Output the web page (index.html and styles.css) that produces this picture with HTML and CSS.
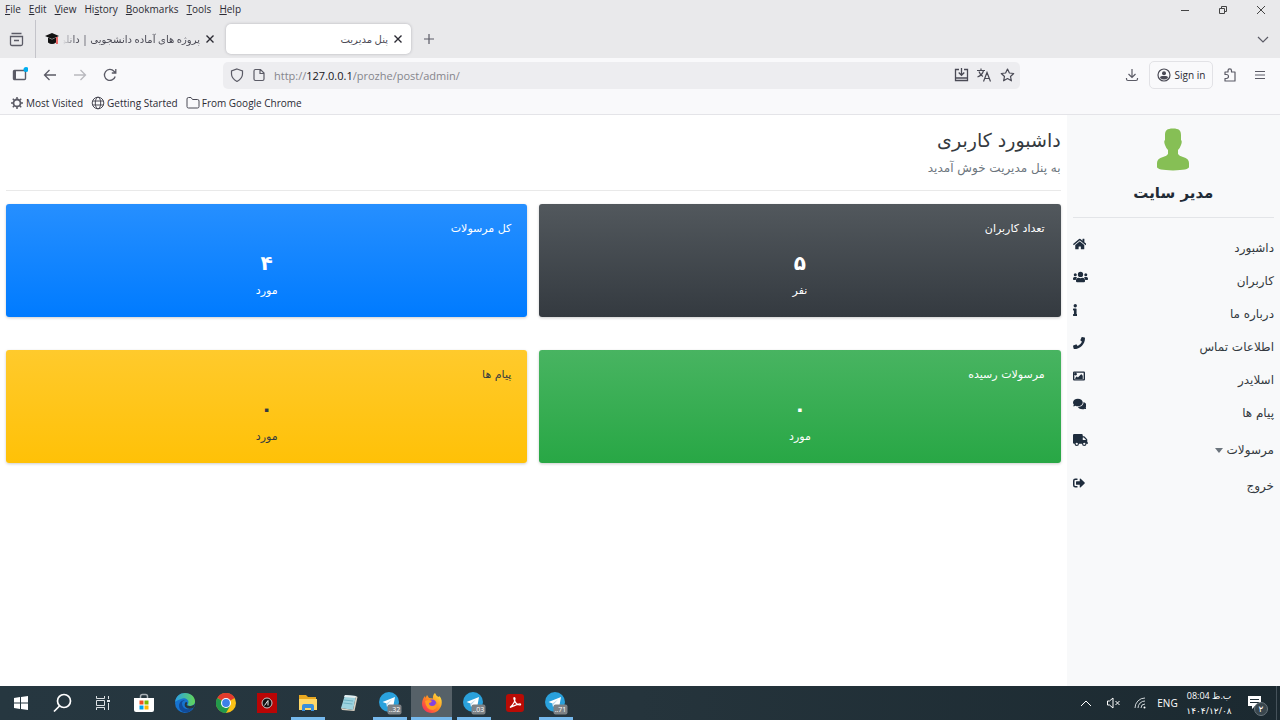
FILE: index.html
```html
<!DOCTYPE html>
<html lang="fa">
<head>
    <meta charset="UTF-8">
    <meta name="viewport" content="width=device-width, initial-scale=1.0">
    <title>پنل مدیریت</title>
    <link rel="stylesheet" href="styles.css">
</head>
<body>

<svg class="defs" aria-hidden="true">
    <symbol id="telegram" viewBox="0 0 24 24">
        <circle cx="11" cy="11" r="10" fill="#2aa1dc"/>
        <path d="M4.500 11 17 6l-2 11-4-3-2 2-.500-3.500z" fill="#fff"/>
        <path d="M8.500 12.500 14 8.500l-4.500 5L9 16z" fill="#b5d6ea"/>
        <rect x="9.500" y="13.500" width="14" height="10" rx="2" fill="#7d8286"/>
    </symbol>
    <symbol id="close" viewBox="0 0 12 12">
        <path d="M2.500 2.500l7 7M9.500 2.500l-7 7" fill="none" stroke="currentColor" stroke-width="1.400"/>
    </symbol>
</svg>

<!-- 浏览器顶部 -->
<header class="browser" lang="en">
    <div class="menubar">
        <nav class="menus">
            <button><u>F</u>ile</button>
            <button><u>E</u>dit</button>
            <button><u>V</u>iew</button>
            <button>Hi<u>s</u>tory</button>
            <button><u>B</u>ookmarks</button>
            <button><u>T</u>ools</button>
            <button><u>H</u>elp</button>
        </nav>
        <div class="window-buttons">
            <button aria-label="Minimize"><svg width="10" height="10"><path d="M1 5.500h8" stroke="#444"/></svg></button>
            <button aria-label="Restore"><svg width="10" height="10" fill="none" stroke="#444"><path d="M1.500 3.500h5v5h-5zM3.500 3.500v-2h5v5h-2"/></svg></button>
            <button aria-label="Close"><svg width="10" height="10" fill="none" stroke="#444"><path d="M1 1l8 8M9 1l-8 8"/></svg></button>
        </div>
    </div>

    <div class="tabs">
        <button class="tabs-view" aria-label="Firefox View">
            <svg width="15" height="15" fill="none" stroke="#5b5b66" stroke-width="1.300"><path d="M2.500 1.500h10M1.500 4.500h12v7.500q0 1.500-1.500 1.500h-9q-1.500 0-1.500-1.500zM5 8.500h5"/></svg>
        </button>
        <div class="tab">
            <svg width="14" height="14" viewBox="0 0 14 14"><path d="M0 4l7-3 7 3-7 3z" fill="#111"/><path d="M3 5.500v5q4 3 8 0v-5L7 7.500z" fill="#111"/><path d="M12 5v7" stroke="#e22" stroke-width="1.300"/></svg>
            <span class="tab-title fade" dir="rtl">پروژه های آماده دانشجویی | دانلو</span>
            <button class="tab-close" aria-label="Close tab"><svg width="12" height="12"><use href="#close"/></svg></button>
        </div>
        <div class="tab active">
            <span class="tab-title" dir="rtl">پنل مدیریت</span>
            <button class="tab-close" aria-label="Close tab"><svg width="12" height="12"><use href="#close"/></svg></button>
        </div>
        <button class="tab-new" aria-label="New tab"><svg width="12" height="12"><path d="M6 1v10M1 6h10" stroke="#5b5b66" stroke-width="1.200"/></svg></button>
        <button class="tab-list" aria-label="List all tabs"><svg width="12" height="12" fill="none" stroke="#5b5b66" stroke-width="1.200"><path d="M1 4l5 5 5-5"/></svg></button>
    </div>

    <div class="toolbar">
        <button class="tool" aria-label="Sidebar">
            <svg width="16" height="16" viewBox="0 0 16 16" fill="none" stroke="#5b5b66" stroke-width="1.400"><rect x="1.500" y="3.500" width="12" height="9" rx="1"/><path d="M3 4v8" stroke-width="2"/><circle cx="14" cy="2.500" r="2.500" fill="#00aef0" stroke="none"/></svg>
        </button>
        <button class="tool" aria-label="Back"><svg width="14" height="14" fill="none" stroke="#5b5b66" stroke-width="1.300"><path d="M13 7H2M6.500 2L1.500 7l5 5"/></svg></button>
        <button class="tool" aria-label="Forward" disabled><svg width="14" height="14" fill="none" stroke="#b9b9be" stroke-width="1.300"><path d="M1 7h11M7.500 2l5 5-5 5"/></svg></button>
        <button class="tool" aria-label="Reload"><svg width="14" height="14" fill="none" stroke="#5b5b66" stroke-width="1.300"><path d="M12.200 8.500A5.500 5.500 0 1 1 11 3.200l1.500 1.500M12.800 1v4h-4"/></svg></button>
        <div class="urlbar">
            <svg width="14" height="14" fill="none" stroke="#5b5b66" stroke-width="1.200"><path d="M7 1l5.500 2v3q0 4.500-5.500 7.500Q1.500 10.500 1.500 6V3z"/></svg>
            <svg width="14" height="14" fill="none" stroke="#5b5b66" stroke-width="1.200"><path d="M3.500 1.500h5l3.500 3.500v6q0 1.500-1.500 1.500h-7Q2 12.500 2 11V3q0-1.500 1.500-1.500zM8 1.500V5.500h4"/></svg>
            <div class="url">
                <label for="url">http://<b>127.0.0.1</b></label><input id="url" type="text" value="/prozhe/post/admin/">
            </div>
            <button aria-label="Install"><svg width="15" height="14" fill="none" stroke="#4a4a55" stroke-width="1.300"><path d="M5 1.500H1.500v11h12v-11H10M7.500 0v7M4.700 4.500l2.800 2.800 2.800-2.800M2 10h11"/></svg></button>
            <button aria-label="Translate"><svg width="15" height="14" fill="none" stroke="#4a4a55" stroke-width="1.200"><path d="M0 2.500h8M4 .500v2M6.500 2.500Q5.500 7 .500 9M2 3.500q1 3.500 4 5M6.500 13.500l3.500-9 3.500 9M8 10.500h4.500"/></svg></button>
            <button aria-label="Bookmark"><svg width="15" height="14" fill="none" stroke="#4a4a55" stroke-width="1.200"><path d="M7.500 1l1.900 4 4.300.500-3.200 3 .9 4.300-3.900-2.200-3.900 2.200.9-4.300-3.200-3 4.300-.500z" stroke-linejoin="round"/></svg></button>
        </div>
        <button class="tool" aria-label="Downloads"><svg width="14" height="14" fill="none" stroke="#5b5b66" stroke-width="1.200"><path d="M7 1v8.500M3.500 6L7 9.500 10.500 6M1.500 10v1q0 1.500 1.500 1.500h8q1.500 0 1.500-1.500v-1"/></svg></button>
        <button class="signin">
            <svg width="14" height="14"><circle cx="7" cy="7" r="6" fill="none" stroke="#4a4a55" stroke-width="1.200"/><circle cx="7" cy="5.200" r="2" fill="#4a4a55"/><path d="M3 10q0-2 2-2h4q2 0 2 2-4 3-8 0z" fill="#4a4a55"/></svg>
            Sign in
        </button>
        <button class="tool" aria-label="Extensions"><svg width="14" height="14" fill="none" stroke="#5b5b66" stroke-width="1.200"><path d="M2 6.500V4h3V2.700a1.700 1.700 0 0 1 3.500 0V4H12V13H2V10.500h1.500a2 2 0 0 0 0-4z" stroke-linejoin="round"/></svg></button>
        <button class="tool" aria-label="Menu"><svg width="12" height="12"><path d="M1 2.500h10M1 6h10M1 9.500h10" stroke="#5b5b66" stroke-width="1.100"/></svg></button>
    </div>

    <nav class="bookmarks">
        <a href="#"><svg width="14" height="14" fill="none" stroke="#5b5b66"><circle cx="7" cy="7" r="3.500" stroke-width="1.800"/><path d="M7 1v2.500M7 10.500V13M1 7h2.500M10.500 7H13M2.800 2.800l1.700 1.700M9.500 9.500l1.700 1.700M2.800 11.200l1.700-1.700M9.500 4.500l1.700-1.700" stroke-width="1.500"/></svg>Most Visited</a>
        <a href="#"><svg width="14" height="14" fill="none" stroke="#4a4a55"><circle cx="7" cy="7" r="5.800"/><ellipse cx="7" cy="7" rx="2.700" ry="5.800"/><path d="M1.500 5h11M1.500 9h11"/></svg>Getting Started</a>
        <a href="#"><svg width="14" height="14" fill="none" stroke="#4a4a55"><path d="M1 3q0-1.500 1.500-1.500H5L6.500 3.500h5q1.500 0 1.500 1.500v5.500q0 1.500-1.500 1.500h-9Q1 12 1 10.500z"/></svg>From Google Chrome</a>
    </nav>
</header>

<!-- 管理面板 -->
<div class="panel" dir="rtl">
    <aside class="sidebar">
        <div class="profile">
            <svg width="34" height="44" viewBox="0 0 34 44" fill="#86bf55"><path d="M17 .500c6 0 8 2 8 6.500v5q1.500 1 0 5-1 3-3 5v4q1 2 5 3 6 1.500 6 6v4q0 3-16 3.500Q1 42 1 39v-4q0-4.500 6-6 4-1 5-3v-4q-2-2-3-5-1.500-4 0-5V7c0-4.500 2-6.500 8-6.500z"/></svg>
            <h2>مدیر سایت</h2>
        </div>
        <ul class="nav">
            <li><a href="#">داشبورد</a>
                <svg viewBox="0 0 576 512"><path d="M280 150L96 300v165q0 15 15 15h115q14 0 14-15v-90q0-15 15-15h65q15 0 15 15v90q0 15 15 15h115q15 0 15-15V300L295 150q-7-5-15 0zM570 252l-84-70V44q0-12-12-12h-56q-12 0-12 12v72l-88-74q-30-22-60 0L5 252q-9 9-2 17l26 30q8 9 17 2L280 109q8-6 16 0l234 192q9 7 17-2l25-30q8-9-2-17z"/></svg></li>
            <li><a href="#">کاربران</a>
                <svg viewBox="0 0 640 512"><circle cx="96" cy="160" r="64"/><circle cx="544" cy="160" r="64"/><circle cx="320" cy="144" r="112"/><path d="M64 256h64q30 0 48 18-52 30-60 110H32q-32 0-32-32v-32q0-64 64-64zM512 256h64q64 0 64 64v32q0 32-32 32h-84q-8-80-60-110 18-18 48-18zM243 288q77 36 154 0 115 0 115 115v29q0 48-48 48H176q-48 0-48-48v-29q0-115 115-115z"/></svg></li>
            <li><a href="#">درباره ما</a>
                <svg viewBox="0 0 192 512"><circle cx="96" cy="72" r="72"/><path d="M20 424h20V280H20q-20 0-20-20v-48q0-20 20-20h112q20 0 20 20v212h20q20 0 20 20v48q0 20-20 20H20q-20 0-20-20v-48q0-20 20-20z"/></svg></li>
            <li><a href="#">اطلاعات تماس</a>
                <svg viewBox="0 0 512 512"><path d="M493 25L389 1q-17-4-25 12l-48 112q-6 14 6 25l61 50q-56 120-183 183l-50-61q-11-12-25-6L13 364q-16 8-12 25l24 104q4 19 23 19c257 0 464-207 464-464q0-19-19-23z"/></svg></li>
            <li><a href="#">اسلایدر</a>
                <svg viewBox="0 0 512 512"><path fill-rule="evenodd" d="M48 64h416q48 0 48 48v288q0 48-48 48H48q-48 0-48-48V112q0-48 48-48zM58 118v276h396V118zM112 120a56 56 0 1 0 1 0zM96 384v-48l56-56q8-8 16 0l40 40 136-136q8-8 16 0l56 56v144z"/></svg></li>
            <li class="nav-messages"><a href="#">پیام ها</a>
                <svg viewBox="0 0 576 512"><path d="M416 192c0-88-93-160-208-160S0 104 0 192c0 34 14 66 38 92-13 30-36 54-36 55-5 5 0 13 6 13 37 0 69-12 92-25 32 16 69 25 108 25 115 0 208-72 208-160zM538 412c24-26 38-58 38-92 0-67-54-124-130-148 15 122-95 210-237 212 35 58 107 96 191 96 39 0 76-9 108-25 23 13 55 25 92 25 7 0 10-8 6-13-1 0-24-25-68-55z"/></svg></li>
            <li class="nav-parcels"><a href="#">مرسولات <i class="caret"></i></a>
                <svg viewBox="0 0 640 512"><path fill-rule="evenodd" d="M48 0h320q48 0 48 48v48h44q20 0 34 14l100 100q14 14 14 34v108h16q16 0 16 16v32q0 16-16 16h-48a96 96 0 0 1-192 0H256a96 96 0 0 1-192 0H48q-48 0-48-48V48Q0 0 48 0zM160 368a48 48 0 1 0 1 0zM480 368a48 48 0 1 0 1 0zM416 144v112h144L460 144z"/></svg></li>
            <li class="nav-exit"><a href="#">خروج</a>
                <svg viewBox="0 0 512 512"><path d="M497 273L329 441q-41 30-41-17v-96H152q-24 0-24-24v-96q0-24 24-24h136V88q0-47 41-17l168 168q14 17 0 34zM192 436v-40q0-12-12-12H96q-32 0-32-32V160q0-32 32-32h84q12 0 12-12V76q0-12-12-12H96Q0 64 0 160v192q0 96 96 96h84q12 0 12-12z"/></svg></li>
        </ul>
    </aside>

    <main class="content">
        <div class="page-head">
            <h1>داشبورد کاربری</h1>
            <p>به پنل مدیریت خوش آمدید</p>
        </div>
        <div class="cards">
            <section class="card dark">
                <h3>تعداد کاربران</h3>
                <strong>۵</strong>
                <p>نفر</p>
            </section>
            <section class="card blue">
                <h3>کل مرسولات</h3>
                <strong>۴</strong>
                <p>مورد</p>
            </section>
            <section class="card green">
                <h3>مرسولات رسیده</h3>
                <strong>۰</strong>
                <p>مورد</p>
            </section>
            <section class="card yellow">
                <h3>پیام ها</h3>
                <strong>۰</strong>
                <p>مورد</p>
            </section>
        </div>
    </main>
</div>

<!-- 任务栏 -->
<footer class="taskbar" lang="en">
    <button aria-label="Start"><svg width="16" height="16" fill="#fff"><path d="M1 3l6-1v5.500H1zM8 2l7-1v6.500H8zM1 8.500h6V14l-6-1zM8 8.500h7V15l-7-1z"/></svg></button>
    <button aria-label="Search"><svg width="20" height="20" fill="none" stroke="#fff" stroke-width="1.700"><circle cx="12" cy="8" r="6.500"/><path d="M7.500 13L2 18.500"/></svg></button>
    <button aria-label="Task view"><svg width="16" height="16" fill="none" stroke="#dde2e5"><path d="M1.500 1v2.500h8V1M1.500 5.500h8v5h-8zM1.500 15v-2.500h8V15M13.500 1v3M13.500 8v7"/><path d="M12 6h3" stroke-width="2"/></svg></button>
    <button aria-label="Store"><svg width="20" height="20"><path d="M6.500 6V3.500q0-2 2-2h3q2 0 2 2V6" fill="none" stroke="#a9b1b6" stroke-width="1.500"/><path d="M0 5h20v12q0 2-2 2H2q-2 0-2-2z" fill="#fff"/><path d="M5.500 7.500h4v4h-4z" fill="#f25022"/><path d="M10.500 7.500h4v4h-4z" fill="#7fba00"/><path d="M5.500 12.500h4v4h-4z" fill="#00a4ef"/><path d="M10.500 12.500h4v4h-4z" fill="#ffb900"/></svg></button>
    <button aria-label="Edge">
        <svg width="20" height="20" viewBox="0 0 20 20">
            <defs><linearGradient id="edge" x1="0" x2="1"><stop offset="0" stop-color="#2b9fe8"/><stop offset="1" stop-color="#62d657"/></linearGradient></defs>
            <circle cx="10" cy="10" r="10" fill="#1673cf"/>
            <path d="M0 9C1 3 5 0 10 0c6 0 10 4 10 8.500 0 3-2.500 4.500-5 4.500-2 0-3-1-2-2 2-4-3-7-7-5-3 1-5 2-6 3z" fill="url(#edge)"/>
            <path d="M7 10c0 5 4 8 11 5-5 8-14 4-14-2 0-4 3-6 6-6-2 1-3 2-3 3z" fill="#114b99"/>
            <path d="M12 11c-1 1 0 2 3 2 2.500 0 4-1 5-2.500l-1 4q-6 3-9-1-1-3 1-4.500 2 0 1 2z" fill="#263740"/>
        </svg>
    </button>
    <button aria-label="Chrome"><svg width="20" height="20"><circle cx="10" cy="10" r="10" fill="#fbc116"/><path d="M10 10L1.300 5A10 10 0 0 1 18.700 5z" fill="#e33b2e"/><path d="M10 10L1.300 5A10 10 0 0 0 10 20l4.300-7.500z" fill="#229a4b"/><circle cx="10" cy="10" r="5" fill="#fff"/><circle cx="10" cy="10" r="3.900" fill="#3c80e8"/></svg></button>
    <button aria-label="Assistant"><svg width="20" height="20"><path d="M0 0h20v20H0z" fill="#b90505"/><circle cx="10" cy="10" r="5" fill="#111" stroke="#c9c9c9"/><path d="M7.500 12.500L11 7.500v5" fill="none" stroke="#eee"/></svg></button>
    <button class="open" aria-label="Explorer"><svg width="20" height="18"><path d="M1 1h7l2 2h8v5H1z" fill="#e9a820"/><path d="M1 5h18v11H1z" fill="#ffd868"/><path d="M4 17v-5q0-2 2-2h8q2 0 2 2v5h-3v-3H7v3z" fill="#3a8fdb"/></svg></button>
    <button aria-label="Notepad"><svg width="20" height="20"><path d="M6 2l11 1-3 14-12-2z" fill="#9dd3df"/><path d="M6 2l11 1-.500 2L5 4z" fill="#e5eef0"/><path d="M17 3l1.500 1-3 14-1.500-1zM2 15l12 2 1.500 1L3 17z" fill="#d9d2c4"/><path d="M5 7l9 1M4.500 10l9 1" stroke="#6eb2c4"/></svg></button>
    <button class="open" aria-label="Telegram 32"><svg width="24" height="24"><use href="#telegram"/><text x="16.500" y="21">..32</text></svg></button>
    <button class="open current" aria-label="Firefox">
        <svg width="20" height="20" viewBox="0 0 20 20">
            <defs><linearGradient id="fox" x1="1" y1="0" x2="0" y2="1"><stop offset="0" stop-color="#fff044"/><stop offset=".500" stop-color="#ff8a1e"/><stop offset="1" stop-color="#f5156c"/></linearGradient></defs>
            <path d="M13 0q1 3 4 4l.500-1C20 6 20 9 19.500 12 18 17 14 20 10 20 4 20 0 16 0 10.500 0 7 2 4 3 3l.500 2L5 2l2 3 4 .500Q10.500 2 13 0z" fill="url(#fox)"/>
            <circle cx="10" cy="11" r="4.500" fill="#8543e0"/>
            <path d="M3 8q4-2 7 0-1 2-3 2 0 3 3 3 4 0 4-4 3 6-3 8-7 0-8-9z" fill="#ff9c22"/>
        </svg>
    </button>
    <button class="open" aria-label="Telegram 03"><svg width="24" height="24"><use href="#telegram"/><text x="16.500" y="21">..03</text></svg></button>
    <button aria-label="Acrobat"><svg width="18" height="18"><rect width="18" height="18" rx="3" fill="#b90b05"/><path d="M4 13.500Q9 9 9 4.500q0-1-.700-1T8 5q1.500 5.500 5.500 6 1.500 0 1-1T4 13.500z" fill="none" stroke="#fff" stroke-width="1.200"/></svg></button>
    <button class="open" aria-label="Telegram 71"><svg width="24" height="24"><use href="#telegram"/><text x="16.500" y="21">..71</text></svg></button>

    <div class="tray">
        <button aria-label="Hidden icons"><svg width="12" height="12" fill="none" stroke="#fff"><path d="M1 9l5-5 5 5"/></svg></button>
        <button aria-label="Volume"><svg width="14" height="12" fill="none" stroke="#fff"><path d="M1.500 4h2L7 1v10L3.500 8h-2zM9.500 4l4 4M13.500 4l-4 4"/></svg></button>
        <button aria-label="Network"><svg width="12" height="12" fill="none" stroke="#d0d6d9"><path d="M1 11A10 10 0 0 1 11 1M4 11a7 7 0 0 1 7-7M7 11a4 4 0 0 1 4-4" /><circle cx="10.500" cy="10.500" r="1" fill="#fff" stroke="none"/></svg></button>
        <button class="lang">ENG</button>
        <button class="clock"><span>08:04 ب.ظ</span><span>۱۴۰۴/۱۲/۰۸</span></button>
        <button class="notes" aria-label="Notifications">
            <svg width="16" height="16"><path d="M1 1h13v10H8l-3 3v-3H1z" fill="#fff"/><path d="M3 4.500h9M3 7.500h9" stroke="#1d2c34"/></svg>
            <span class="badge">۲</span>
        </button>
    </div>
</footer>

</body>
</html>
```

FILE: styles.css
```css
* {
    box-sizing: border-box;
}
body {
    margin: 0;
    min-height: 100vh;
    display: flex;
    flex-direction: column;
    font-family: "DejaVu Sans", sans-serif;
    background-color: #fff;
}
h1, h2, h3, p, ul {
    margin: 0;
    padding: 0;
}
button {
    display: flex;
    align-items: center;
    justify-content: center;
    padding: 0;
    border: none;
    background: none;
    color: inherit;
    font: inherit;
}
a {
    color: inherit;
    text-decoration: none;
}
svg {
    flex: none;
}
.defs {
    position: absolute;
    width: 0;
    height: 0;
}

/* 浏览器顶部 */
.browser {
    font-family: "Open Sans", "DejaVu Sans", sans-serif;
    font-size: 10px;
    color: #2b2a33;
    background-color: #f9f9fb;
    border-bottom: 1px solid #e4e4e8;
}
.menubar {
    display: flex;
    justify-content: space-between;
    height: 20px;
    padding-left: 5px;
    background-color: #e9e9eb;
}
.menus {
    display: flex;
    gap: 8px;
}
.menus button {
    height: 18px;
}
.window-buttons {
    display: flex;
}
.window-buttons button {
    width: 38px;
}
.tabs {
    display: flex;
    align-items: center;
    height: 38px;
    background-color: #e9e9eb;
}
.tabs-view {
    width: 36px;
    height: 38px;
    padding-right: 2px;
    border-right: 1px solid #c4c4ca;
}
.tab {
    display: flex;
    align-items: center;
    gap: 4px;
    width: 185px;
    height: 30px;
    margin-left: 2px;
    padding: 0 7px;
    border-radius: 5px;
}
.tab + .tab {
    margin-left: 3px;
}
.tab.active {
    background-color: #fff;
    box-shadow: 0 0 3px #b0b0b6;
}
.tab-title {
    flex: 1;
    min-width: 0;
    overflow: hidden;
    white-space: nowrap;
    color: #4a4a55;
}
.tab-title.fade {
    mask-image: linear-gradient(to right, transparent, #000 12px);
}
.tab-new {
    width: 36px;
    height: 30px;
}
.tab-list {
    width: 34px;
    height: 30px;
    margin-left: auto;
}
.toolbar {
    display: flex;
    align-items: center;
    height: 34px;
    padding: 0 5px;
}
.tool {
    width: 30px;
    height: 27px;
}
.urlbar {
    flex: 1;
    display: flex;
    align-items: center;
    gap: 8px;
    height: 27px;
    margin: 0 97px 0 98px;
    padding: 0 5px 0 7px;
    border-radius: 5px;
    background-color: #ededf0;
}
.url {
    flex: 1;
    display: flex;
    align-items: center;
    font-size: 11px;
    color: #85858c;
}
.url b {
    font-weight: normal;
    color: #15141a;
}
.url input {
    flex: 1;
    padding: 0;
    border: none;
    outline: none;
    background: none;
    color: inherit;
    font: inherit;
}
.signin {
    gap: 4px;
    width: 64px;
    height: 28px;
    margin: 0 2px;
    border: 1px solid #e2e2e6;
    border-radius: 5px;
}
.bookmarks {
    display: flex;
    gap: 8px;
    height: 22px;
    padding-left: 10px;
}
.bookmarks a {
    display: flex;
    align-items: center;
    gap: 2px;
}

/* 管理面板 */
.panel {
    flex: 1;
    display: flex;
    color: #343a40;
}
.sidebar {
    width: 16.67%;
    padding: 13px 6px;
    background-color: #f8f9fa;
}
.profile {
    display: flex;
    flex-direction: column;
    align-items: center;
    height: 90px;
    border-bottom: 1px solid #e3e5e8;
}
.profile h2 {
    margin-top: 8px;
    font-size: 15px;
    line-height: 26px;
    color: #212b36;
}
.nav {
    padding-top: 14px;
    list-style: none;
}
.nav li {
    display: flex;
    justify-content: space-between;
    height: 33px;
    font-size: 12px;
    line-height: 33px;
}
.nav svg {
    height: 12px;
    margin-top: 6px;
    fill: #1f2d3d;
}
.nav .nav-messages svg {
    margin-top: 1px;
}
.nav .nav-parcels {
    height: 40px;
    line-height: 40px;
}
.nav .nav-parcels svg {
    margin-top: 4px;
}
.nav .nav-exit svg {
    margin-top: 7px;
}
.caret {
    display: inline-block;
    border: 4px solid transparent;
    border-top: 5px solid #6c757d;
    border-bottom: none;
    vertical-align: middle;
}
.content {
    flex: 1;
    padding: 11px 6px;
}
.page-head {
    height: 65px;
    margin-bottom: 13px;
    border-bottom: 1px solid #e9e9e9;
}
.page-head h1 {
    font-size: 19px;
    font-weight: normal;
    line-height: 28px;
}
.page-head p {
    font-size: 12px;
    line-height: 28px;
    color: #6c757d;
}
.cards {
    display: grid;
    grid-template-columns: 1fr 1fr;
    gap: 33px 12px;
}
.card {
    padding: 14px 16px 13px;
    border-radius: 3px;
    box-shadow: 0 1px 3px rgba(0, 0, 0, 0.2);
    text-align: center;
    color: #fff;
    font-size: 11px;
}
.card h3 {
    font-size: 11px;
    font-weight: normal;
    line-height: 22px;
    text-align: right;
}
.card strong {
    display: block;
    margin-top: 8px;
    font-size: 20px;
    line-height: 30px;
}
.card p {
    line-height: 26px;
}
.card.dark {
    background: linear-gradient(#52585d, #343a40);
}
.card.blue {
    background: linear-gradient(#268fff, #007bff);
}
.card.green {
    background: linear-gradient(#48b461, #28a745);
}
.card.yellow {
    background: linear-gradient(#ffca2c, #ffc107);
    color: #343a40;
}

/* 任务栏 */
.taskbar {
    display: flex;
    height: 34px;
    background: linear-gradient(to right, #263740, #25343c 50%, #1b2930);
    color: #fff;
    font-family: "Open Sans", "DejaVu Sans", sans-serif;
    font-size: 10px;
}
.taskbar > button {
    width: 41px;
}
.taskbar > button.open {
    background: linear-gradient(#76b9ed, #76b9ed) center bottom / 34px 3px no-repeat;
}
.taskbar > button.current {
    margin: 0 1px;
    background-color: #566168;
    background-size: 100% 3px;
}
.taskbar text {
    fill: #fff;
    font-size: 7px;
    text-anchor: middle;
}
.tray {
    display: flex;
    margin-left: auto;
    margin-right: 3px;
    padding-right: 3px;
    border-right: 1px solid #45525a;
}
.tray button {
    width: 27px;
}
.tray .lang {
    width: 29px;
}
.tray .clock {
    flex-direction: column;
    width: 54px;
    font-size: 9px;
    line-height: 15px;
}
.tray .notes {
    position: relative;
    width: 37px;
}
.badge {
    position: absolute;
    left: 18px;
    top: 16px;
    width: 14px;
    height: 14px;
    border-radius: 50%;
    background-color: #39464d;
    border: 1px solid #69757c;
    font-size: 9px;
    line-height: 12px;
}
```
